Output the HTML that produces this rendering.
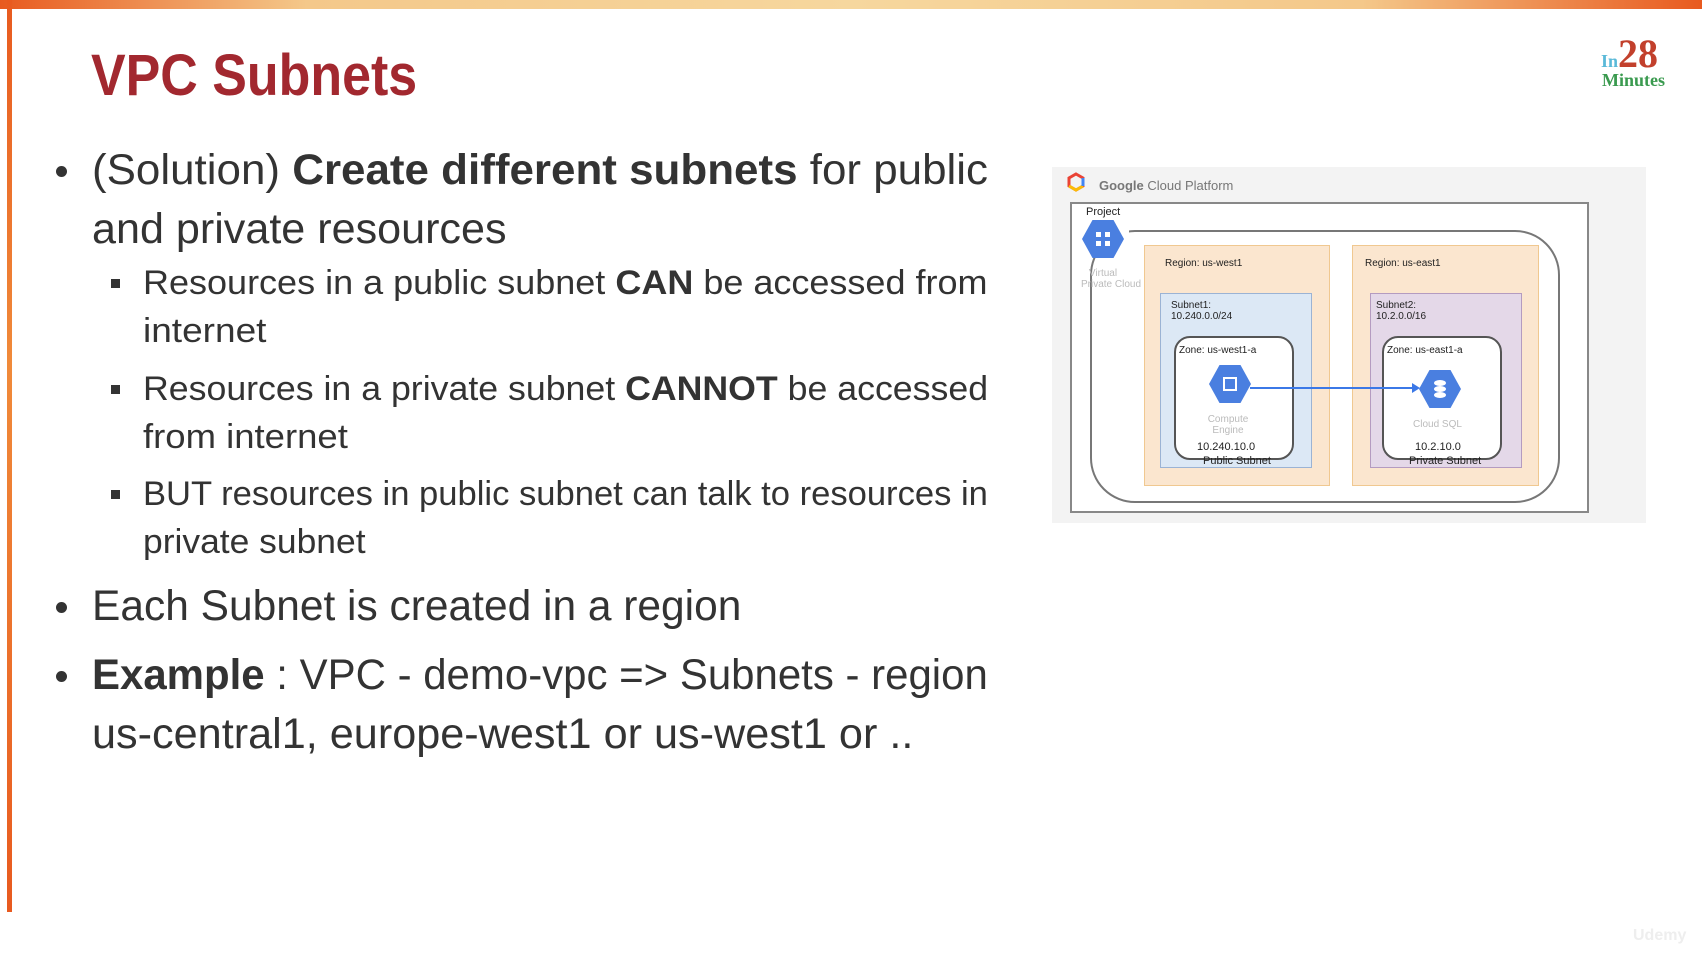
<!DOCTYPE html>
<html><head><meta charset="utf-8"><style>
html,body{margin:0;padding:0;width:1702px;height:956px;overflow:hidden;background:#fff;font-family:"Liberation Sans",sans-serif;}
.abs{position:absolute;}
.topbar{left:0;top:0;width:1702px;height:9px;background:linear-gradient(90deg,#e85a1f 0%,#f4c88a 18%,#f6d79e 50%,#f4c88a 80%,#e85a1f 100%);}
.leftbar{left:7px;top:0;width:5px;height:912px;background:linear-gradient(180deg,#e85a1f,#f08a3a 40%,#e85a1f);}
.t{position:absolute;white-space:nowrap;color:#333;transform-origin:0 0;}
.m{font-size:43px;}
.s{font-size:34px;}
.dot{position:absolute;width:11px;height:11px;border-radius:50%;background:#333;}
.sq{position:absolute;width:9px;height:9px;background:#333;}
.d{position:absolute;font-size:10px;color:#222;white-space:nowrap;}
</style></head><body>
<div class="abs topbar"></div>
<div class="abs leftbar"></div>
<div class="t" style="left:91px;top:42px;font-size:58px;font-weight:bold;color:#a2282f;" id="title">VPC Subnets</div>

<div class="abs" style="left:1601px;top:30px;font-family:'Liberation Serif',serif;font-weight:bold;">
<span style="color:#5ab9d8;font-size:18px;">In</span><span style="color:#c2402c;font-size:40px;">28</span></div>
<div class="abs" style="left:1602px;top:70px;font-family:'Liberation Serif',serif;font-weight:bold;color:#3a9a4f;font-size:18px;">Minutes</div>

<div class="dot" style="left:56px;top:166px"></div>
<div class="t m" id="l1" style="left:92px;top:146px">(Solution) <b>Create different subnets</b> for public</div>
<div class="t m" id="l2" style="left:92px;top:205px">and private resources</div>
<div class="sq" style="left:111px;top:279px"></div>
<div class="t s" id="l3" style="left:143px;top:264px">Resources in a public subnet <b>CAN</b> be accessed from</div>
<div class="t s" id="l4" style="left:143px;top:312px">internet</div>
<div class="sq" style="left:111px;top:385px"></div>
<div class="t s" id="l5" style="left:143px;top:370px">Resources in a private subnet <b>CANNOT</b> be accessed</div>
<div class="t s" id="l6" style="left:143px;top:418px">from internet</div>
<div class="sq" style="left:111px;top:490px"></div>
<div class="t s" id="l7" style="left:143px;top:475px">BUT resources in public subnet can talk to resources in</div>
<div class="t s" id="l8" style="left:143px;top:523px">private subnet</div>
<div class="dot" style="left:56px;top:602px"></div>
<div class="t m" id="l9" style="left:92px;top:582px">Each Subnet is created in a region</div>
<div class="dot" style="left:56px;top:671px"></div>
<div class="t m" id="l10" style="left:92px;top:651px"><b>Example</b> : VPC - demo-vpc =&gt; Subnets - region</div>
<div class="t m" id="l11" style="left:92px;top:710px">us-central1, europe-west1 or us-west1 or ..</div>

<!-- diagram -->
<div class="abs" style="left:1052px;top:167px;width:594px;height:356px;background:#f3f3f3;"></div>
<svg class="abs" style="left:1066px;top:172px" width="20" height="20" viewBox="0 0 20 20"><path d="M10 2 L17 6 L17 14 L10 18 L3 14 L3 6Z" fill="none" stroke="#ea4335" stroke-width="3"/><path d="M3 14 L10 18 L17 14" fill="none" stroke="#fbbc05" stroke-width="3"/><path d="M17 6 L17 14" stroke="#4285f4" stroke-width="3"/></svg>
<div class="d" style="left:1099px;top:178px;font-size:13px;color:#777;"><b>Google</b> Cloud Platform</div>
<div class="abs" style="left:1070px;top:202px;width:515px;height:307px;border:2px solid #888;background:#fff;"></div>
<div class="abs" style="left:1090px;top:230px;width:466px;height:269px;border:2px solid #777;border-radius:45px;"></div>
<div class="abs" style="left:1144px;top:245px;width:184px;height:239px;background:#fbe6cf;border:1px solid #f0c890;"></div>
<div class="abs" style="left:1352px;top:245px;width:185px;height:239px;background:#fbe6cf;border:1px solid #f0c890;"></div>
<div class="abs" style="left:1160px;top:293px;width:150px;height:173px;background:#dce8f5;border:1px solid #9bb3d4;"></div>
<div class="abs" style="left:1370px;top:293px;width:150px;height:173px;background:#e4d8e8;border:1px solid #b49bc0;"></div>
<div class="abs" style="left:1174px;top:336px;width:116px;height:120px;background:#fff;border:2px solid #555;border-radius:16px;"></div>
<div class="abs" style="left:1382px;top:336px;width:116px;height:120px;background:#fff;border:2px solid #555;border-radius:16px;"></div>
<div class="abs" style="left:1099px;top:208px;width:30px;height:28px;background:#fff;"></div>
<div class="d" style="left:1086px;top:206px;font-size:11px;">Project</div>
<svg class="abs" style="left:1040px;top:160px" width="620" height="370">
<g transform="translate(63,79)"><polygon points="-21,0 -10.5,-19 10.5,-19 21,0 10.5,19 -10.5,19" fill="#4a7fe0"/><rect x="-7" y="-7" width="5" height="5" fill="#fff"/><rect x="2" y="-7" width="5" height="5" fill="#fff"/><rect x="-7" y="2" width="5" height="5" fill="#fff"/><rect x="2" y="2" width="5" height="5" fill="#fff"/></g>
<g transform="translate(190,224)"><polygon points="-21,0 -10.5,-19 10.5,-19 21,0 10.5,19 -10.5,19" fill="#4a7fe0"/><rect x="-6" y="-6" width="12" height="12" fill="none" stroke="#fff" stroke-width="2"/></g>
<line x1="210" y1="228" x2="372" y2="228" stroke="#3b78e7" stroke-width="2"/><polygon points="372,223 380,228 372,233" fill="#3b78e7"/>
<g transform="translate(400,229)"><polygon points="-21,0 -10.5,-19 10.5,-19 21,0 10.5,19 -10.5,19" fill="#4a7fe0"/><ellipse cx="0" cy="-6" rx="6" ry="3" fill="#fff"/><ellipse cx="0" cy="0" rx="6" ry="3" fill="#fff"/><ellipse cx="0" cy="6" rx="6" ry="3" fill="#fff"/></g>
</svg>
<div class="d" style="left:1081px;top:268px;color:#bbb;text-align:center;width:44px;">Virtual<br>Private Cloud</div>
<div class="d" style="left:1165px;top:258px;">Region: us-west1</div>
<div class="d" style="left:1365px;top:258px;">Region: us-east1</div>
<div class="d" style="left:1171px;top:300px;">Subnet1:<br>10.240.0.0/24</div>
<div class="d" style="left:1376px;top:300px;">Subnet2:<br>10.2.0.0/16</div>
<div class="d" style="left:1179px;top:345px;">Zone: us-west1-a</div>
<div class="d" style="left:1387px;top:345px;">Zone: us-east1-a</div>
<div class="d" style="left:1200px;top:414px;color:#bbb;text-align:center;width:56px;">Compute<br>Engine</div>
<div class="d" style="left:1413px;top:419px;color:#bbb;">Cloud SQL</div>
<div class="d" style="left:1197px;top:441px;font-size:11px;">10.240.10.0</div>
<div class="d" style="left:1415px;top:441px;font-size:11px;">10.2.10.0</div>
<div class="d" style="left:1203px;top:455px;font-size:11px;">Public Subnet</div>
<div class="d" style="left:1409px;top:455px;font-size:11px;">Private Subnet</div>
<div class="d" style="left:1633px;top:927px;font-size:16px;color:#eee;font-weight:bold;">Udemy</div>
<script>
var W={title:326,l1:896,l2:415,l3:845,l4:123,l5:845,l6:205,l7:845,l8:223,l9:649,l10:896,l11:821};
for(var k in W){var e=document.getElementById(k);var s=W[k]/e.scrollWidth;e.style.transform='scaleX('+s+')';}
</script>
</body></html>
